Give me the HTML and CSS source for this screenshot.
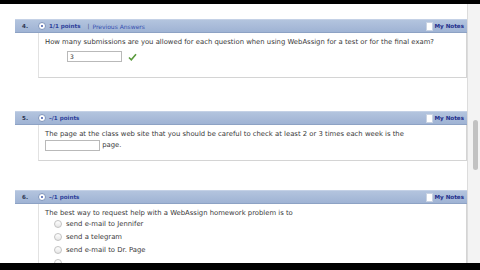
FILE: index.html
```html
<!DOCTYPE html>
<html lang="en">
<head>
    <meta charset="UTF-8">
    <title>WebAssign Questions</title>
    <link rel="stylesheet" href="styles.css">
</head>
<body>
    <div class="window">
        <div class="page">
            <div class="question q4">
                <div class="qbar">
                    <span class="qnum">4.</span>
                    <span class="status"></span>
                    <span class="points">1/1 points</span>
                    <span class="sep">|</span>
                    <span class="prev">Previous Answers</span>
                    <span class="notes"><span class="note-icon"></span>My Notes</span>
                </div>
                <div class="qbody">
                    <p class="qtext">How many submissions are you allowed for each question when using WebAssign for a test or for the final exam?</p>
                    <div class="answer">
                        <span class="field filled">3</span>
                        <svg class="check" width="9" height="8" viewBox="0 0 9 8"><path d="M1 4.5 L3.3 6.8 L8 1.2" fill="none" stroke="#5a9a3c" stroke-width="1.6"/></svg>
                    </div>
                </div>
            </div>

            <div class="question q5">
                <div class="qbar">
                    <span class="qnum">5.</span>
                    <span class="status"></span>
                    <span class="points">–/1 points</span>
                    <span class="notes"><span class="note-icon"></span>My Notes</span>
                </div>
                <div class="qbody">
                    <p class="qtext">The page at the class web site that you should be careful to check at least 2 or 3 times each week is the</p>
                    <div class="blank"><span class="field"></span> page.</div>
                </div>
            </div>

            <div class="question q6">
                <div class="qbar">
                    <span class="qnum">6.</span>
                    <span class="status"></span>
                    <span class="points">–/1 points</span>
                    <span class="notes"><span class="note-icon"></span>My Notes</span>
                </div>
                <div class="qbody">
                    <p class="qtext">The best way to request help with a WebAssign homework problem is to</p>
                    <ul class="options">
                        <li><span class="radio"></span>send e-mail to Jennifer</li>
                        <li><span class="radio"></span>send a telegram</li>
                        <li><span class="radio"></span>send e-mail to Dr. Page</li>
                        <li><span class="radio"></span></li>
                    </ul>
                </div>
            </div>
        </div>
        <div class="scrollbar">
            <div class="thumb"></div>
        </div>
    </div>
</body>
</html>
```

FILE: styles.css
```css
html, body {
    margin: 0;
    padding: 0;
    background: #000;
    width: 480px;
    height: 270px;
    overflow: hidden;
}
body {
    font-family: "DejaVu Sans", Verdana, sans-serif;
    font-size: 6.85px;
    color: #333;
}
.window {
    margin-top: 4px;
    height: 259px;
    background: #fff;
    display: flex;
    overflow: hidden;
}
.page {
    flex: 1;
    padding: 15px 0 0 15px;
}
.question {
    width: 452px;
}
.q4 {
    margin-bottom: 33px;
}
.q5 {
    margin-bottom: 29px;
}
.qbar {
    height: 14px;
    box-sizing: border-box;
    background: linear-gradient(#b3c4de, #9fb3d4);
    border-top: 1px solid #c4d1e6;
    border-bottom: 1px solid #8da2c4;
    display: flex;
    align-items: center;
    font-size: 5.6px;
    color: #2a3b8f;
}
.qnum {
    width: 15px;
    padding-left: 7px;
    font-weight: bold;
    color: #2b3550;
}
.status {
    width: 6px;
    height: 6px;
    border-radius: 50%;
    background: #fff;
    border: 1px solid #7f95bb;
    margin-left: 1px;
    margin-right: 3px;
    position: relative;
}
.status::after {
    content: "";
    position: absolute;
    left: 2px;
    top: 2px;
    width: 2px;
    height: 2px;
    border-radius: 50%;
    background: #3f58a8;
}
.points {
    font-weight: bold;
    color: #2d3f9a;
}
.sep {
    margin: 0 3px 0 7px;
    color: #3e4f8a;
}
.prev {
    color: #3550b0;
    font-size: 6px;
}
.notes {
    margin-left: auto;
    margin-right: 3px;
    display: flex;
    align-items: center;
    font-weight: bold;
    color: #1f2f8c;
}
.note-icon {
    width: 5px;
    height: 7px;
    background: #fff;
    border: 1px solid #c9d3e3;
    margin-right: 2px;
}
.qbody {
    margin-left: 23px;
    border-left: 1px solid #e2e2e2;
    border-right: 1px solid #d4d4d4;
    border-bottom: 1px solid #d4d4d4;
    padding: 5px 6px 0 6px;
}
.q4 .qbody {
    height: 39px;
}
.q5 .qbody {
    height: 30px;
}
.q6 .qbody {
    height: 100px;
}
.qtext {
    margin: 0;
    line-height: 9px;
    color: #3a3a3a;
}
.answer {
    display: flex;
    align-items: center;
    margin: 4px 0 0 22px;
}
.field {
    display: inline-block;
    box-sizing: border-box;
    width: 55px;
    height: 11px;
    border: 1px solid #b9b9b9;
    background: #fff;
    vertical-align: middle;
    font-size: 6px;
    line-height: 9px;
    padding-left: 2px;
}
.check {
    margin-left: 6px;
}
.blank {
    margin-top: 1px;
    line-height: 11px;
    color: #3a3a3a;
}
.options {
    list-style: none;
    margin: -1px 0 0 9px;
    padding: 0;
}
.options li {
    height: 13px;
    display: flex;
    align-items: center;
    color: #3a3a3a;
}
.radio {
    width: 6px;
    height: 6px;
    border-radius: 50%;
    border: 1px solid #c2c2c2;
    background: linear-gradient(#fff, #e6e6e6);
    margin-right: 4px;
}
.scrollbar {
    width: 12px;
    border-left: 1px solid #dcdcdc;
    background: #f3f3f3;
    position: relative;
}
.thumb {
    position: absolute;
    left: 5px;
    top: 116px;
    width: 5px;
    height: 50px;
    border-radius: 3px;
    background: #c2c2c2;
}
```
